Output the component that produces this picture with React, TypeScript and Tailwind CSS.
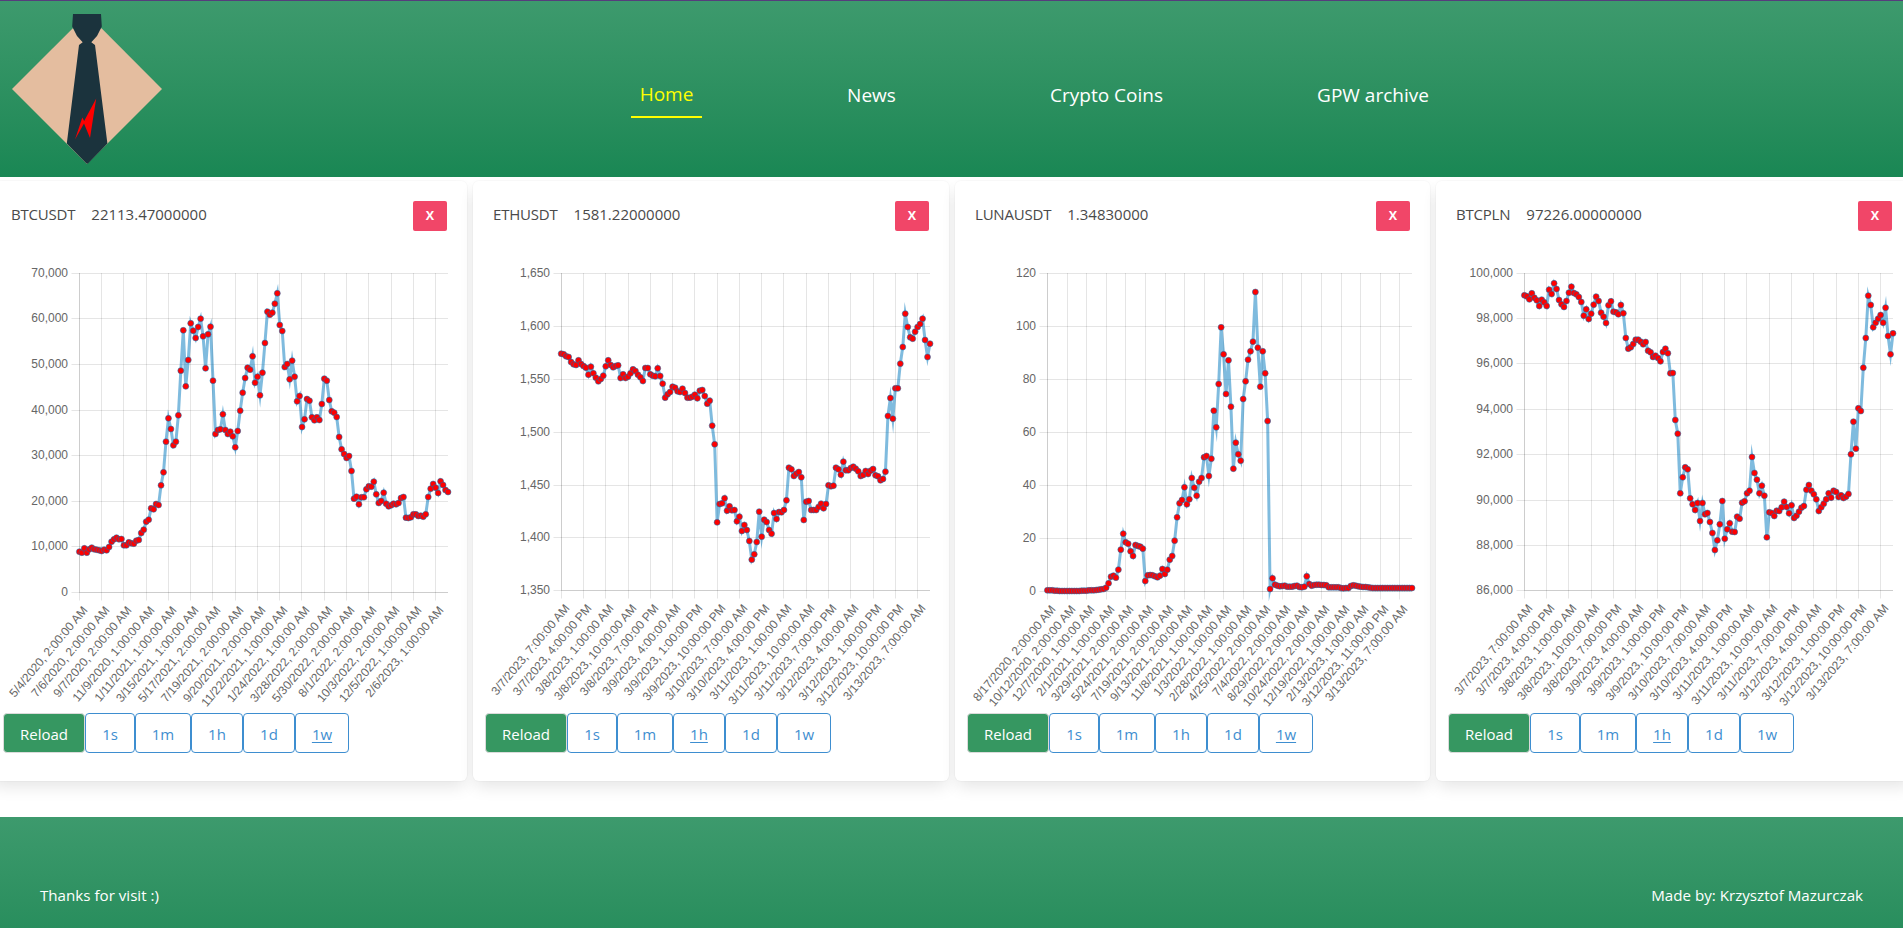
type Interval = "1s" | "1m" | "1h" | "1d" | "1w";

interface ChartSpec {
  symbol: string;
  price: string;
  active: Interval;
  originX: number;
  originY: number;
  x0: number;
  x1: number;
  bottom: number;
  yTicks: [string, number][];
  xTicks: [string, number][];
  samples: number[];
}

const zip = (labels: string[], at: number[]): [string, number][] => labels.map((l, i) => [l, at[i]]);

const GRID = [79, 101, 123, 146, 168, 190, 212, 235, 257, 279, 301, 324, 346, 368, 391, 413, 435];

const WEEKLY = [
  "5/4/2020, 2:00:00 AM", "7/6/2020, 2:00:00 AM", "9/7/2020, 2:00:00 AM", "11/9/2020, 1:00:00 AM",
  "1/11/2021, 1:00:00 AM", "3/15/2021, 1:00:00 AM", "5/17/2021, 2:00:00 AM", "7/19/2021, 2:00:00 AM",
  "9/20/2021, 2:00:00 AM", "11/22/2021, 1:00:00 AM", "1/24/2022, 1:00:00 AM", "3/28/2022, 2:00:00 AM",
  "5/30/2022, 2:00:00 AM", "8/1/2022, 2:00:00 AM", "10/3/2022, 2:00:00 AM", "12/5/2022, 1:00:00 AM",
  "2/6/2023, 1:00:00 AM",
];

const HOURLY = [
  "3/7/2023, 7:00:00 AM", "3/7/2023, 4:00:00 PM", "3/8/2023, 1:00:00 AM", "3/8/2023, 10:00:00 AM",
  "3/8/2023, 7:00:00 PM", "3/9/2023, 4:00:00 AM", "3/9/2023, 1:00:00 PM", "3/9/2023, 10:00:00 PM",
  "3/10/2023, 7:00:00 AM", "3/10/2023, 4:00:00 PM", "3/11/2023, 1:00:00 AM", "3/11/2023, 10:00:00 AM",
  "3/11/2023, 7:00:00 PM", "3/12/2023, 4:00:00 AM", "3/12/2023, 1:00:00 PM", "3/12/2023, 10:00:00 PM",
  "3/13/2023, 7:00:00 AM",
];

const LUNA = [
  "8/17/2020, 2:00:00 AM", "10/12/2020, 2:00:00 AM", "12/7/2020, 1:00:00 AM", "2/1/2021, 1:00:00 AM",
  "3/29/2021, 2:00:00 AM", "5/24/2021, 2:00:00 AM", "7/19/2021, 2:00:00 AM", "9/13/2021, 2:00:00 AM",
  "11/8/2021, 1:00:00 AM", "1/3/2022, 1:00:00 AM", "2/28/2022, 1:00:00 AM", "4/25/2022, 2:00:00 AM",
  "7/4/2022, 2:00:00 AM", "8/29/2022, 2:00:00 AM", "10/24/2022, 2:00:00 AM", "12/19/2022, 1:00:00 AM",
  "2/13/2023, 1:00:00 AM", "3/12/2023, 11:00:00 PM", "3/13/2023, 7:00:00 AM",
];

const CHARTS: ChartSpec[] = [
  {
    symbol: "BTCUSDT", price: "22113.47000000", active: "1w",
    originX: 3, originY: 250, x0: 79.4, x1: 448, bottom: 592,
    yTicks: zip(["70,000", "60,000", "50,000", "40,000", "30,000", "20,000", "10,000", "0"], [273, 318, 364, 410, 455, 501, 546, 592]),
    xTicks: zip(WEEKLY, GRID),
    samples: [
      905, 908, 895, 908, 898, 893, 898, 899, 901, 903, 899, 901, 891, 875, 868, 863, 868, 867, 886, 886, 877, 880, 881, 872, 870,
      849, 839, 815, 809, 775, 778, 762, 765, 706, 667, 575, 505, 537, 586, 575, 496, 362, 241, 409, 330, 220, 242, 264, 231, 206,
      259, 355, 253, 230, 392, 552, 540, 538, 493, 540, 552, 545, 559, 592, 543, 482, 428, 384, 353, 359, 319, 398, 380, 436, 368,
      279, 185, 194, 188, 161, 130, 225, 243, 351, 342, 388, 332, 380, 454, 438, 531, 508, 447, 452, 502, 511, 502, 510, 462, 386,
      392, 450, 484, 488, 501, 561, 598, 612, 624, 618, 663, 746, 740, 763, 742, 742, 718, 709, 710, 695, 733, 759, 753, 728, 761,
      769, 766, 761, 763, 759, 744, 741, 803, 804, 802, 793, 793, 798, 797, 800, 793, 741, 716, 702, 713, 729, 694, 705, 720, 726,
    ],
  },
  {
    symbol: "ETHUSDT", price: "1581.22000000", active: "1h",
    originX: 485, originY: 320, x0: 561.2, x1: 930, bottom: 590,
    yTicks: zip(["1,650", "1,600", "1,550", "1,500", "1,450", "1,400", "1,350"], [273, 326, 379, 432, 485, 537, 590]),
    xTicks: zip(HOURLY, GRID.map((g) => g + 482)),
    samples: [
      101, 103, 109, 111, 126, 133, 135, 121, 132, 138, 143, 164, 140, 160, 173, 184, 177, 167, 139, 121, 135, 142, 138, 136, 174,
      163, 174, 170, 160, 148, 153, 164, 172, 183, 144, 144, 163, 167, 169, 145, 168, 191, 233, 223, 216, 200, 203, 214, 216, 206,
      219, 233, 233, 230, 224, 235, 212, 210, 228, 251, 242, 317, 373, 607, 552, 550, 535, 572, 559, 571, 570, 604, 590, 633, 615,
      630, 663, 719, 703, 666, 575, 650, 599, 606, 630, 641, 579, 597, 576, 577, 570, 541, 443, 448, 468, 461, 456, 472, 600, 545,
      543, 570, 570, 570, 561, 551, 565, 552, 496, 499, 497, 443, 448, 464, 425, 451, 451, 444, 440, 446, 454, 468, 465, 453, 462,
      452, 447, 466, 469, 481, 477, 455, 288, 234, 296, 205, 205, 131, 81, -19, 21, 52, 56, 35, 21, 12, -4, 60, 111, 71,
    ],
  },
  {
    symbol: "LUNAUSDT", price: "1.34830000", active: "1w",
    originX: 967, originY: 250, x0: 1047.4, x1: 1412, bottom: 591,
    yTicks: zip(["120", "100", "80", "60", "40", "20", "0"], [273, 326, 379, 432, 485, 538, 591]),
    xTicks: zip(LUNA, [1047, 1067, 1086, 1106, 1125, 1145, 1165, 1184, 1204, 1223, 1243, 1262, 1282, 1301, 1321, 1341, 1360, 1380, 1399]),
    samples: [
      1021, 1021, 1021, 1022, 1022, 1023, 1023, 1023, 1023, 1023, 1023, 1023, 1023, 1023, 1022, 1022, 1022, 1021, 1021, 1021, 1020, 1019, 1018, 1017, 1013,
      1000, 980, 977, 983, 959, 899, 851, 877, 881, 904, 918, 885, 888, 890, 896, 993, 976, 975, 976, 979, 982, 977, 957, 972, 959,
      929, 918, 872, 802, 760, 750, 712, 763, 748, 684, 713, 737, 695, 684, 622, 618, 678, 626, 482, 532, 402, 232, 313, 432, 331,
      470, 656, 578, 613, 632, 447, 394, 329, 304, 275, 126, 293, 410, 304, 370, 513, 1017, 985, 1004, 1007, 1009, 1008, 1007, 1010, 1010,
      1010, 1008, 1007, 1011, 1012, 1010, 979, 1002, 1007, 1005, 1004, 1004, 1005, 1005, 1006, 1012, 1012, 1012, 1012, 1012, 1014, 1015, 1014, 1014, 1008,
      1006, 1007, 1009, 1010, 1011, 1011, 1012, 1013, 1014, 1014, 1014, 1014, 1014, 1014, 1014, 1014, 1014, 1014, 1014, 1014, 1014, 1014, 1014, 1014, 1014,
    ],
  },
  {
    symbol: "BTCPLN", price: "97226.00000000", active: "1h",
    originX: 1448, originY: 250, x0: 1524.4, x1: 1893, bottom: 590,
    yTicks: zip(["100,000", "98,000", "96,000", "94,000", "92,000", "90,000", "88,000", "86,000"], [273, 318, 363, 409, 454, 500, 545, 590]),
    xTicks: zip(HOURLY, GRID.map((g) => g + 1445)),
    samples: [
      136, 139, 148, 130, 143, 151, 168, 149, 157, 168, 119, 132, 100, 117, 150, 163, 171, 153, 128, 110, 129, 133, 141, 156, 197,
      178, 207, 191, 164, 140, 153, 188, 200, 219, 166, 154, 185, 187, 193, 165, 190, 264, 296, 292, 282, 269, 269, 275, 283, 276,
      302, 307, 321, 317, 324, 334, 306, 296, 310, 370, 369, 510, 551, 730, 682, 652, 658, 745, 763, 780, 759, 813, 759, 793, 789,
      816, 849, 900, 871, 823, 753, 866, 838, 820, 845, 846, 800, 806, 758, 754, 730, 722, 621, 669, 689, 730, 707, 737, 862, 787,
      789, 798, 782, 783, 772, 755, 771, 790, 766, 804, 797, 785, 773, 768, 719, 705, 722, 733, 748, 783, 772, 761, 748, 730, 743,
      722, 726, 741, 736, 744, 740, 732, 613, 515, 596, 475, 483, 353, 264, 137, 165, 232, 218, 206, 195, 218, 173, 258, 313, 250,
    ],
  },
];

function LineChart({ spec }: { spec: ChartSpec }) {
  const step = (spec.x1 - spec.x0) / (spec.samples.length - 1);
  const points = spec.samples.map((s, i) => ({ x: spec.x0 + i * step, y: spec.originY + s / 3 }));
  const left = spec.xTicks[0][1] + 0.5;
  const base = spec.bottom + 0.5;
  return (
    <svg width="452" height="464" viewBox={`${spec.originX} 249 452 464`} className="block overflow-visible font-['Liberation_Sans',Arial,sans-serif] text-[12px]">
      <g stroke="rgba(0,0,0,0.1)" strokeWidth="1">
        {spec.yTicks.map(([label, y]) => (
          <line key={label} x1={left - 8} x2={spec.x1} y1={y + 0.5} y2={y + 0.5} />
        ))}
        {spec.xTicks.map(([label, x]) => (
          <line key={label} x1={x + 0.5} x2={x + 0.5} y1={273} y2={base + 8} />
        ))}
        <line x1={left} x2={left} y1={273} y2={base} />
        <line x1={left} x2={spec.x1} y1={base} y2={base} />
      </g>
      <g fill="#666666">
        {spec.yTicks.map(([label, y]) => (
          <text key={label} x={left - 11.5} y={y + 4} textAnchor="end">{label}</text>
        ))}
        {spec.xTicks.map(([label, x]) => (
          <text key={label} transform={`translate(${x + 6} ${spec.bottom + 16}) rotate(-50)`} y="4" textAnchor="end">{label}</text>
        ))}
      </g>
      <polyline
        points={points.map((p) => `${p.x.toFixed(2)},${p.y.toFixed(2)}`).join(" ")}
        fill="none" stroke="rgba(0,119,190,0.5)" strokeWidth="3" strokeLinejoin="miter" strokeMiterlimit="10"
      />
      <g fill="#ff0000" stroke="rgba(0,119,190,0.5)" strokeWidth="1">
        {points.map((p, i) => (
          <circle key={i} cx={p.x} cy={p.y} r="3" />
        ))}
      </g>
    </svg>
  );
}

const INTERVALS: { name: Interval; width: string }[] = [
  { name: "1s", width: "w-[50px]" },
  { name: "1m", width: "w-[56px]" },
  { name: "1h", width: "w-[52px]" },
  { name: "1d", width: "w-[52px]" },
  { name: "1w", width: "w-[54px]" },
];

function CoinCard({ spec }: { spec: ChartSpec }) {
  return (
    <section className="flex h-[600px] flex-col rounded-md bg-white px-3 pt-5 shadow-[0_8px_16px_-2px_rgba(10,10,10,0.1),0_0_0_1px_rgba(10,10,10,0.02)]">
      <div className="flex h-[48px] items-start justify-between px-2">
        <div className="flex gap-4 pt-px text-[15px] leading-6 text-[#4a4a4a]">
          <span className="tracking-[-0.2px]">{spec.symbol}</span>
          <span>{spec.price}</span>
        </div>
        <button className="h-[30px] w-[34px] rounded-[2px] bg-[#f14668] pt-px text-[12.5px] font-bold text-white">X</button>
      </div>
      <LineChart spec={spec} />
      <div className="flex">
        <button className="h-10 w-[82px] rounded border border-[#dbdbdb] bg-[#369761] pt-0.5 text-[15px] text-white">Reload</button>
        {INTERVALS.map(({ name, width }) => (
          <button
            key={name}
            className={`h-10 rounded border border-[#3e8ed0] bg-white pt-0.5 text-[15px] text-[#3e8ed0] ${width} ${
              name === spec.active ? "underline underline-offset-2" : ""
            }`}
          >
            {name}
          </button>
        ))}
      </div>
    </section>
  );
}

function Logo() {
  return (
    <svg width="151" height="151" viewBox="12 14 151 151" className="block">
      <path d="M12 89 L72.8 28.2 H101.5 L162 89 L87 164 Z" fill="#e4bd9f" />
      <path d="M73 14 H101 L101.8 26.5 L97 36 L91.3 42.3 L95 45 L107.4 143.5 L88.5 163 Q87.3 164.3 86 163 L66.8 143.5 L79 45 L82.7 42.3 L77 36 L72.2 26.5 Z" fill="#1b333d" />
      <path d="M96.2 98.5 L90 138 L84 123.5 L75 139.5 L82.3 117.5 L84.2 121 Z" fill="#ff0000" />
    </svg>
  );
}

export default function App() {
  return (
    <div className="flex h-[928px] w-full flex-col overflow-hidden bg-white font-['Open_Sans','Noto_Sans',sans-serif]">
      <header className="flex h-[177px] shrink-0 items-start border-t border-[#563d7c] bg-linear-to-b from-[#3d9a6d] to-[#198754] pt-[13px] pl-3">
        <Logo />
        <nav className="ml-[468px] flex pt-[63px] text-[19px] leading-[34px] whitespace-nowrap text-white">
          <a className="mr-[136px] h-[41px] w-[71px] border-b-2 border-[#ffff00] text-center text-[#ffff00]">Home</a>
          <a className="mr-[136px] w-[67px] pt-px text-center">News</a>
          <a className="mr-[136px] w-[131px] pt-px text-center">Crypto Coins</a>
          <a className="w-[130px] pt-px text-center">GPW archive</a>
        </nav>
      </header>
      <main className="-ml-[9px] grid h-[640px] w-[1921px] shrink-0 grid-cols-[476px_476px_475px_476px] gap-x-1.5 pt-1">
        {CHARTS.map((spec) => (
          <CoinCard key={spec.symbol} spec={spec} />
        ))}
      </main>
      <footer className="flex h-[177px] shrink-0 items-start justify-between bg-linear-to-b from-[#3d9a6d] to-[#198754] px-10 pt-[66px] text-[15.15px] leading-6 text-white">
        <p>Thanks for visit :)</p>
        <p>Made by: Krzysztof Mazurczak</p>
      </footer>
    </div>
  );
}
